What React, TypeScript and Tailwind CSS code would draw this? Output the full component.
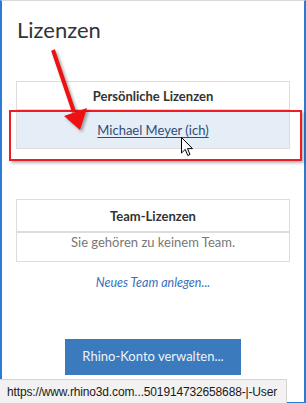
import React from 'react'

// Overlays: annotation arrow, highlight box, mouse pointer, status bar
const Arrow = () => (
  <svg
    className="absolute left-0 top-0 drop-shadow-[2px_2px_1.5px_rgba(0,0,0,0.35)]"
    width={306}
    height={403}
    viewBox="0 0 306 403"
  >
    <line x1={53} y1={50} x2={74} y2={112} stroke="#ee1111" strokeWidth={4} />
    <polygon points="64,116 87,108 80,130" fill="#ee1111" />
  </svg>
)

const Cursor = () => (
  <svg className="absolute left-[181px] top-[137px]" width={13} height={20} viewBox="0 0 13 20">
    <path
      d="M0.5 0.5 L0.5 16 L4.2 12.4 L6.8 18.5 L9 17.5 L6.5 11.6 L11.5 11.6 Z"
      fill="#ffffff"
      stroke="#000000"
      strokeWidth={1}
      strokeLinejoin="round"
    />
  </svg>
)

const App = () => {
  return (
    <div className="relative h-[403px] w-[306px] overflow-hidden bg-white font-['Lato','Liberation_Sans',sans-serif]">
      {/* Window frame */}
      <div className="h-full border-x-2 border-b border-t border-x-[#2b7bd2] border-b-[#2b7bd2] border-t-[#d9d9d9] px-[14px]">
        <h1 className="pl-px pt-[16px] text-[22px] font-normal leading-[26px] text-[#333333]">Lizenzen</h1>

        {/* Personal licenses */}
        <div className="mt-[38px] border border-[#dddddd]">
          <div className="flex h-[28px] items-center justify-center border-b border-[#dddddd] pt-[2px] text-[13px] font-bold text-[#333333]">
            Persönliche Lizenzen
          </div>
          <div className="flex h-[38px] items-center justify-center bg-[#e5edf6] pt-[3px] text-[13px]">
            <a className="text-[#2e4d78] underline underline-offset-2">Michael Meyer (ich)</a>
          </div>
        </div>

        {/* Team licenses */}
        <div className="mt-[50px] border border-[#dddddd]">
          <div className="flex h-[33px] items-center justify-center border-b-2 border-[#dddddd] pt-[3px] text-[13px] font-bold text-[#333333]">
            Team-Lizenzen
          </div>
          <div className="h-[28px] pt-px text-center text-[13px] leading-[16px] text-[#777777]">
            Sie gehören zu keinem Team.
          </div>
        </div>

        <p className="mt-[13px] text-center text-[12.5px] italic leading-[16px] text-[#3a70b8]">Neues Team anlegen...</p>

        <div className="mx-auto mt-[48px] flex h-[36px] w-[176px] items-center justify-center bg-[#3a7abd] text-[13px] text-[#eef3f8]">
          Rhino-Konto verwalten...
        </div>
      </div>

      {/* Highlight box */}
      <div className="absolute left-[9px] top-[110px] h-[51px] w-[293px] border-2 border-[#ee1c24] shadow-[2px_2px_3px_rgba(0,0,0,0.3)]" />

      <Arrow />
      <Cursor />

      {/* Status bar */}
      <div className="absolute bottom-0 left-0 flex h-[24px] w-[287px] items-center whitespace-nowrap border-r border-t border-[#d4d4d4] bg-[#f2f2f2] pl-[7px] font-['Liberation_Sans',sans-serif] text-[12px] tracking-[-0.15px] text-[#1a1a1a]">
        https://www.rhino3d.com...501914732658688-|-User
      </div>
    </div>
  )
}

export default App
